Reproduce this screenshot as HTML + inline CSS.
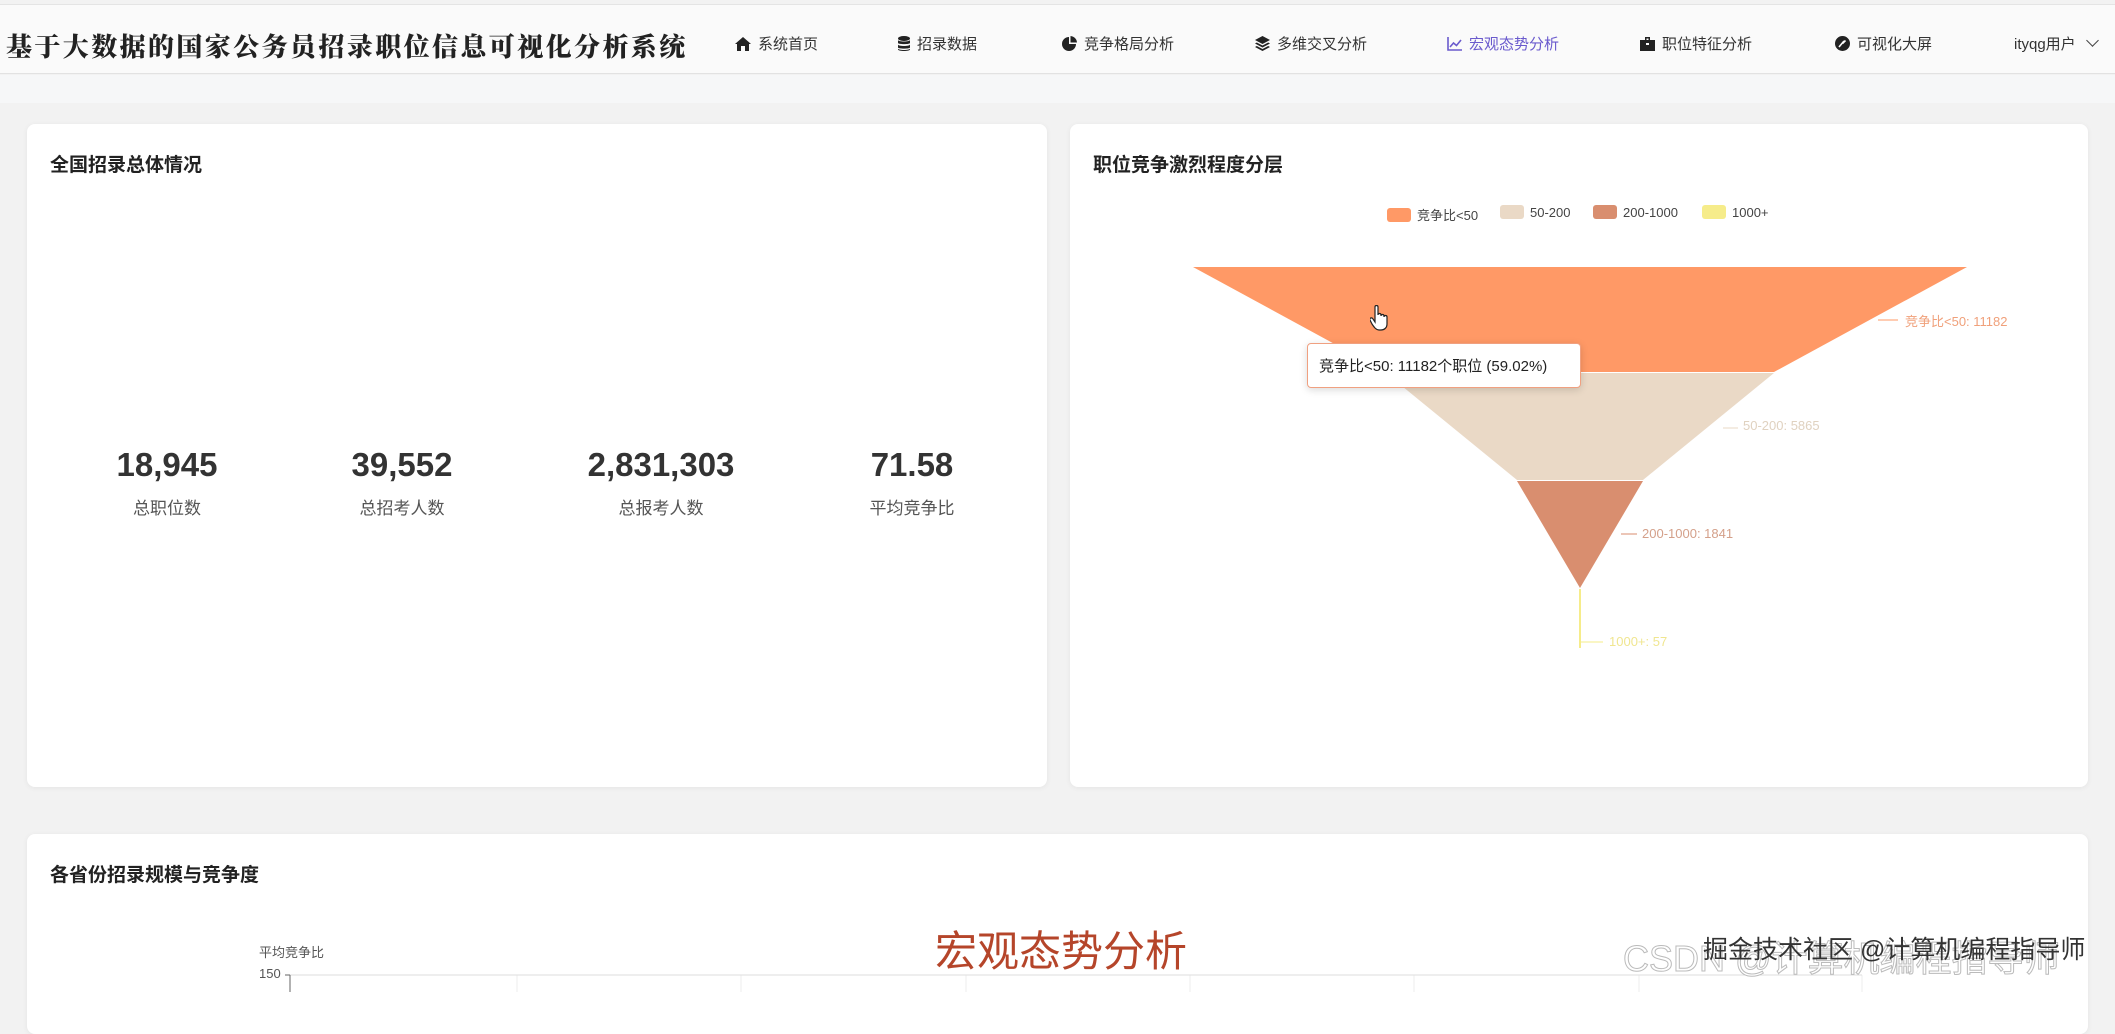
<!DOCTYPE html>
<html><head><meta charset="utf-8"><style>
*{margin:0;padding:0;box-sizing:border-box}
body{width:2115px;height:992px;overflow:hidden;background:#f2f2f2;font-family:"Liberation Sans","Noto Sans CJK SC",sans-serif;position:relative;color:#333}
.hdr{position:absolute;left:0;top:4px;width:2115px;height:70px;background:#fafafa;border-top:1px solid #e4e4e4;border-bottom:1px solid #e2e2e2}
.title{position:absolute;left:6px;top:22px;font-family:"Noto Serif CJK SC",serif;font-weight:900;font-size:26px;color:#222;letter-spacing:2.4px}
.nav{position:absolute;top:28px;font-size:15px;color:#333;white-space:nowrap}
.nav svg{vertical-align:-2px;margin-right:7px}
.band{position:absolute;left:0;top:75px;width:2115px;height:28px;background:#f6f7f8}
.card{position:absolute;background:#fff;border-radius:8px;box-shadow:0 1px 6px rgba(0,0,0,.06);z-index:0}
.ct{position:absolute;left:23px;top:26px;font-size:19px;font-weight:bold;color:#222}
.stat{position:absolute;top:322px;width:240px;text-align:center}
.stat b{display:block;font-size:33px;color:#333}
.stat span{display:block;font-size:17px;color:#555;margin-top:10px}
.lg{position:absolute;top:205px;font-size:13px;color:#444;z-index:2}
.lg i{display:inline-block;width:24px;height:14px;border-radius:3px;vertical-align:-2px;margin-right:6px}
.lab{position:absolute;font-size:13px;z-index:2}
.top{z-index:2}
</style></head><body>
<div class="hdr">
<div class="title">基于大数据的国家公务员招录职位信息可视化分析系统</div>
<div class="nav" style="left:735px"><svg width="16" height="14" viewBox="0 0 16 14"><path d="M8 0L0 7h2v7h4V9h4v5h4V7h2z" fill="#222"/></svg>系统首页</div>
<div class="nav" style="left:898px"><svg width="12" height="15" viewBox="0 0 12 15"><ellipse cx="6" cy="2.5" rx="6" ry="2.5" fill="#222"/><path d="M0 4v3c0 1.5 12 1.5 12 0V4c0 2-12 2-12 0zM0 8.5v3c0 1.5 12 1.5 12 0v-3c0 2-12 2-12 0zM0 12.5v1c0 2 12 2 12 0v-1c0 2-12 2-12 0z" fill="#222"/></svg>招录数据</div>
<div class="nav" style="left:1062px"><svg width="15" height="15" viewBox="0 0 15 15"><path d="M7 1A7 7 0 1 0 14 8H7z" fill="#222"/><path d="M8.5 0v6.5H15A7 7 0 0 0 8.5 0z" fill="#222"/></svg>竞争格局分析</div>
<div class="nav" style="left:1255px"><svg width="15" height="15" viewBox="0 0 15 15"><path d="M7.5 0L15 4 7.5 8 0 4z" fill="#222"/><path d="M0 7.5l7.5 4 7.5-4-1.8-1-5.7 3-5.7-3zM0 11l7.5 4 7.5-4-1.8-1-5.7 3-5.7-3z" fill="#222"/></svg>多维交叉分析</div>
<div class="nav" style="left:1447px;color:#6a5acd"><svg width="15" height="14" viewBox="0 0 15 14"><path d="M1 0v13h14" stroke="#6a5acd" stroke-width="1.6" fill="none"/><path d="M3 10l3.5-4 3 2.5L14 3" stroke="#6a5acd" stroke-width="1.6" fill="none"/></svg>宏观态势分析</div>
<div style="position:absolute;left:1445px;top:72px;width:125px;height:3px;background:#6a5acd"></div>
<div class="nav" style="left:1640px"><svg width="15" height="14" viewBox="0 0 15 14"><path d="M5 0h5v3h5v11H0V3h5zM6.5 1.5v1.5h2V1.5z" fill="#222"/><rect x="6" y="6" width="3" height="2" fill="#fff"/></svg>职位特征分析</div>
<div class="nav" style="left:1835px"><svg width="15" height="15" viewBox="0 0 15 15"><circle cx="7.5" cy="7.5" r="7.5" fill="#222"/><path d="M4 11l5-6M7.5 7.5l3-3" stroke="#fff" stroke-width="1.6"/></svg>可视化大屏</div>
<div class="nav" style="left:2014px">ityqg用户 <span style="display:inline-block;margin-left:8px;width:9px;height:9px;border-right:1.5px solid #444;border-bottom:1.5px solid #444;transform:rotate(45deg);vertical-align:4px"></span></div>
</div>
<div class="band"></div>

<div class="card" style="left:27px;top:124px;width:1020px;height:663px">
<div class="ct">全国招录总体情况</div>
<div class="stat" style="left:20px"><b>18,945</b><span>总职位数</span></div>
<div class="stat" style="left:255px"><b>39,552</b><span>总招考人数</span></div>
<div class="stat" style="left:514px"><b>2,831,303</b><span>总报考人数</span></div>
<div class="stat" style="left:765px"><b>71.58</b><span>平均竞争比</span></div>
</div>

<div class="card" style="left:1070px;top:124px;width:1018px;height:663px">
<div class="ct">职位竞争激烈程度分层</div>
</div>
<div class="card" style="left:27px;top:834px;width:2061px;height:200px">
<div class="ct" style="top:26px">各省份招录规模与竞争度</div>
</div>
<div class="lg" style="left:1387px"><i style="background:#ff9966"></i>竞争比&lt;50</div>
<div class="lg" style="left:1500px"><i style="background:#ead9c6"></i>50-200</div>
<div class="lg" style="left:1593px"><i style="background:#d98e6f"></i>200-1000</div>
<div class="lg" style="left:1702px"><i style="background:#f6ec8a"></i>1000+</div>
<svg style="position:absolute;left:0;top:0;z-index:1" width="2115" height="992">
<polygon points="1193,267 1967,267 1774,372 1386,372" fill="#ff9966"/>
<polygon points="1386,373 1774,373 1643,480 1517,480" fill="#ead9c6"/>
<polygon points="1517,481 1643,481 1580,588" fill="#d98e6f"/>
<line x1="1580" y1="589" x2="1580" y2="648" stroke="#f6ec8a" stroke-width="2"/>
<line x1="1878" y1="320" x2="1898" y2="320" stroke="#ff9966"/>
<line x1="1723" y1="428" x2="1738" y2="428" stroke="#ead9c6"/>
<line x1="1621" y1="534" x2="1637" y2="534" stroke="#d98e6f"/>
<line x1="1581" y1="642" x2="1603" y2="642" stroke="#f6ec8a"/>
<g stroke="#eee"><line x1="517" y1="975" x2="517" y2="992"/><line x1="741" y1="975" x2="741" y2="992"/><line x1="966" y1="975" x2="966" y2="992"/><line x1="1190" y1="975" x2="1190" y2="992"/><line x1="1414" y1="975" x2="1414" y2="992"/><line x1="1639" y1="975" x2="1639" y2="992"/><line x1="1862" y1="975" x2="1862" y2="992"/></g>
<line x1="290" y1="975" x2="1862" y2="975" stroke="#ddd"/>
<line x1="290" y1="975" x2="290" y2="992" stroke="#666"/>
<line x1="285" y1="975" x2="290" y2="975" stroke="#666"/>
</svg>
<div class="lab" style="left:1905px;top:311px;color:#f0a07a">竞争比&lt;50: 11182</div>
<div class="lab" style="left:1743px;top:418px;color:#e0d2c0">50-200: 5865</div>
<div class="lab" style="left:1642px;top:526px;color:#d4a08a">200-1000: 1841</div>
<div class="lab" style="left:1609px;top:634px;color:#f0e690">1000+: 57</div>
<div class="top" style="position:absolute;left:1307px;top:343px;width:274px;height:45px;background:#fff;border:1px solid #f0a080;border-radius:4px;box-shadow:0 2px 8px rgba(0,0,0,.15);font-size:15px;color:#222;padding:11px 0 0 11px;white-space:nowrap">竞争比&lt;50: 11182个职位 (59.02%)</div>
<svg class="top" style="position:absolute;left:1370px;top:305px" width="18" height="26" viewBox="0 0 18 26"><path d="M5 2c0-2 3-2 3 0v8c0-2 3-2 3 0v1c0-2 3-2 3 0v1c0-2 3-2 3 0v7c0 4-3 6-6 6H9c-3 0-5-3-7-6L0 15c-1-2 2-3 3-1l2 3z" fill="#fff" stroke="#222" stroke-width="1.2"/></svg>

<div class="top" style="position:absolute;left:259px;top:942px;font-size:13px;color:#555">平均竞争比</div>
<div class="top" style="position:absolute;left:259px;top:966px;font-size:13px;color:#555">150</div>
<div class="top" style="position:absolute;left:935px;top:918px;font-size:42px;color:#b5452a">宏观态势分析</div>
<div class="top" style="position:absolute;left:1623px;top:930px;font-size:36px;color:#fff;-webkit-text-stroke:1px #bbb;white-space:nowrap">CSDN @计算机编程指导师</div>
<div class="top" style="position:absolute;left:1703px;top:930px;font-size:25px;color:#333;white-space:nowrap">掘金技术社区 @计算机编程指导师</div>
</body></html>
